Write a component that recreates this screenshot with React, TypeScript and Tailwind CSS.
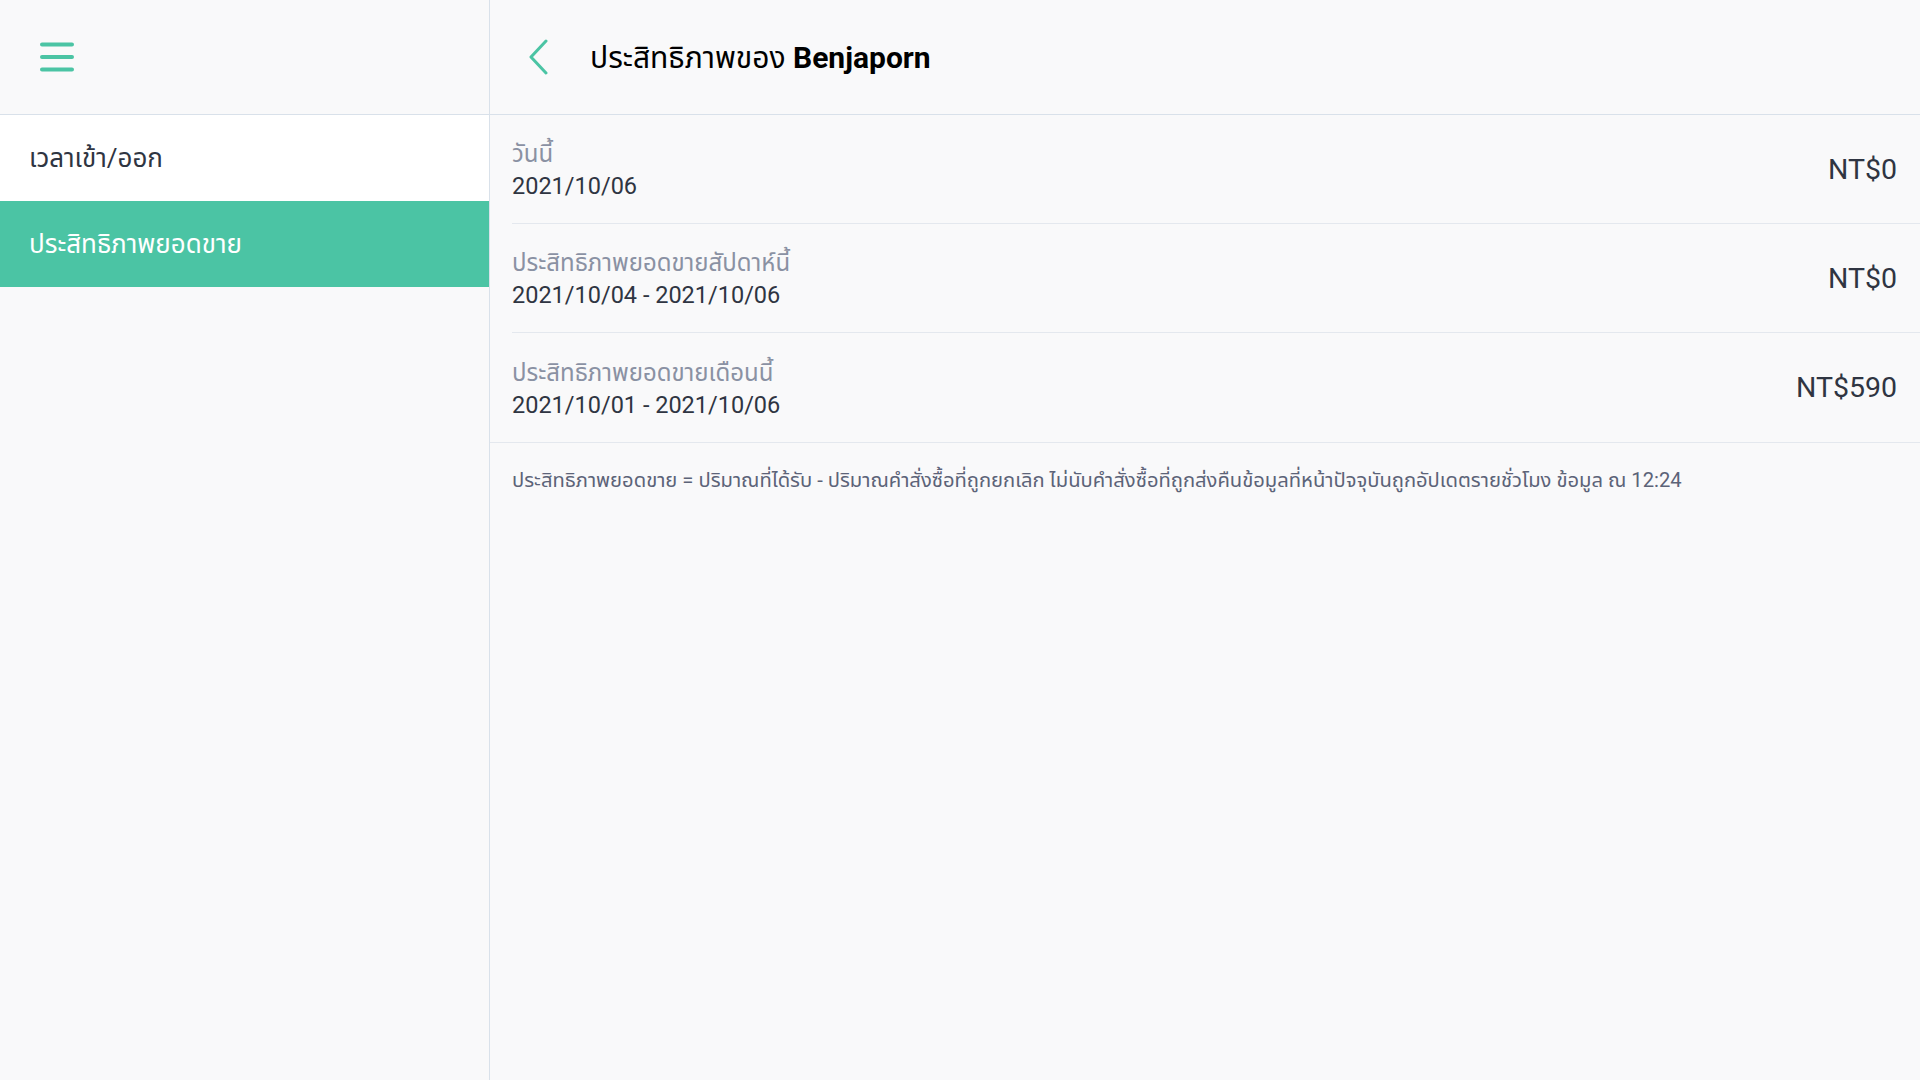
import React from "react"

const rows = [
  { label: "วันนี้", range: "2021/10/06", amount: "NT$0" },
  { label: "ประสิทธิภาพยอดขายสัปดาห์นี้", range: "2021/10/04 - 2021/10/06", amount: "NT$0" },
  { label: "ประสิทธิภาพยอดขายเดือนนี้", range: "2021/10/01 - 2021/10/06", amount: "NT$590" },
]

const font = { fontFamily: 'Roboto, "Noto Sans Thai", "Noto Sans", sans-serif' }

export default function App() {
  return (
    <div className="flex h-screen w-full bg-[#f9f9fa]" style={font}>
      {/* sidebar */}
      <aside className="flex w-[490px] shrink-0 flex-col border-r border-[#d9e1ea]">
        <div className="flex h-[115px] items-center border-b border-[#d9e1ea] pl-[40px]">
          <svg width="34" height="30" viewBox="0 0 34 30" fill="none">
            <path d="M2 2.5h30M2 15h30M2 27.5h30" stroke="#4bc4a4" strokeWidth="4" strokeLinecap="round" />
          </svg>
        </div>
        <div className="flex h-[86px] items-center bg-white pl-[29px] text-[26px] text-[#2f3542]">เวลาเข้า/ออก</div>
        <div className="flex h-[86px] items-center bg-[#4bc4a4] pl-[29px] text-[26px] text-white">ประสิทธิภาพยอดขาย</div>
      </aside>

      {/* main */}
      <main className="flex flex-1 flex-col">
        <div className="flex h-[115px] items-center border-b border-[#d9e1ea] pl-[38px]">
          <svg width="22" height="36" viewBox="0 0 22 36" fill="none">
            <path d="M18 2L3 18l15 16" stroke="#4bc4a4" strokeWidth="3" strokeLinecap="round" strokeLinejoin="round" />
          </svg>
          <h1 className="ml-[40px] text-[30px] text-black">
            ประสิทธิภาพของ <span className="font-bold">Benjaporn</span>
          </h1>
        </div>

        <div className="border-b border-[#e4e8ee]">
          {rows.map((r, i) => (
            <div key={r.label} className="pl-[22px]">
              <div className={"flex h-[109px] items-center justify-between pr-[23px] " + (i < rows.length - 1 ? "border-b border-[#e4e8ee]" : "")}>
                <div className="flex flex-col pt-[2px]">
                  <span className="text-[24px] leading-[32px] text-[#8a91a3]">{r.label}</span>
                  <span className="text-[23.5px] leading-[32px] text-[#2f3542]">{r.range}</span>
                </div>
                <span className="pt-[2px] text-[28.5px] text-[#2f3542]">{r.amount}</span>
              </div>
            </div>
          ))}
        </div>

        <p className="pl-[22px] pt-[22px] text-[20.2px] text-[#5c6378]">
          ประสิทธิภาพยอดขาย = ปริมาณที่ได้รับ - ปริมาณคำสั่งซื้อที่ถูกยกเลิก ไม่นับคำสั่งซื้อที่ถูกส่งคืนข้อมูลที่หน้าปัจจุบันถูกอัปเดตรายชั่วโมง ข้อมูล ณ 12:24
        </p>
      </main>
    </div>
  )
}
